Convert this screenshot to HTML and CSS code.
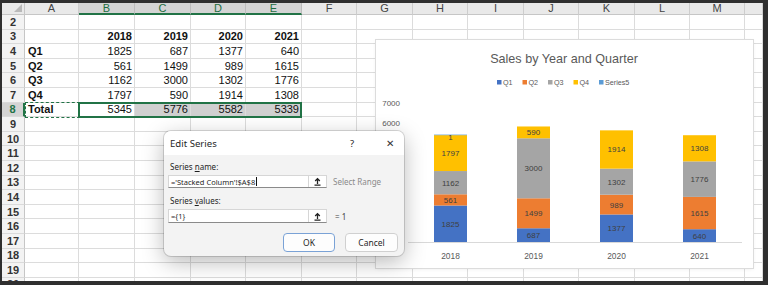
FILE: index.html
```html
<!DOCTYPE html>
<html>
<head>
<meta charset="utf-8">
<link rel="stylesheet" href="styles.css">
</head>
<body>
<div class="sheet">
  <div class="grid">
    <div class="corner"></div><div class="h">A</div><div class="h hs">B</div><div class="h hs">C</div><div class="h hs">D</div><div class="h hs">E</div><div class="h">F</div><div class="h">G</div><div class="h">H</div><div class="h">I</div><div class="h">J</div><div class="h">K</div><div class="h">L</div><div class="h">M</div><div class="h"></div>

    <div class="rh">2</div><div class="c"></div><div class="c"></div><div class="c"></div><div class="c"></div><div class="c"></div><div class="c"></div><div class="c"></div><div class="c"></div><div class="c"></div><div class="c"></div><div class="c"></div><div class="c"></div><div class="c"></div><div class="c"></div>

    <div class="rh">3</div><div class="c"></div><div class="c n b">2018</div><div class="c n b">2019</div><div class="c n b">2020</div><div class="c n b">2021</div><div class="c"></div><div class="c"></div><div class="c"></div><div class="c"></div><div class="c"></div><div class="c"></div><div class="c"></div><div class="c"></div><div class="c"></div>

    <div class="rh">4</div><div class="c b">Q1</div><div class="c n">1825</div><div class="c n">687</div><div class="c n">1377</div><div class="c n">640</div><div class="c"></div><div class="c"></div><div class="c"></div><div class="c"></div><div class="c"></div><div class="c"></div><div class="c"></div><div class="c"></div><div class="c"></div>

    <div class="rh">5</div><div class="c b">Q2</div><div class="c n">561</div><div class="c n">1499</div><div class="c n">989</div><div class="c n">1615</div><div class="c"></div><div class="c"></div><div class="c"></div><div class="c"></div><div class="c"></div><div class="c"></div><div class="c"></div><div class="c"></div><div class="c"></div>

    <div class="rh">6</div><div class="c b">Q3</div><div class="c n">1162</div><div class="c n">3000</div><div class="c n">1302</div><div class="c n">1776</div><div class="c"></div><div class="c"></div><div class="c"></div><div class="c"></div><div class="c"></div><div class="c"></div><div class="c"></div><div class="c"></div><div class="c"></div>

    <div class="rh">7</div><div class="c b">Q4</div><div class="c n">1797</div><div class="c n">590</div><div class="c n">1914</div><div class="c n">1308</div><div class="c"></div><div class="c"></div><div class="c"></div><div class="c"></div><div class="c"></div><div class="c"></div><div class="c"></div><div class="c"></div><div class="c"></div>

    <div class="rh rhs">8</div><div class="c b">Total</div><div class="c n">5345</div><div class="c n hl">5776</div><div class="c n hl">5582</div><div class="c n hl">5339</div><div class="c"></div><div class="c"></div><div class="c"></div><div class="c"></div><div class="c"></div><div class="c"></div><div class="c"></div><div class="c"></div><div class="c"></div>

    <div class="rh">9</div><div class="c"></div><div class="c"></div><div class="c"></div><div class="c"></div><div class="c"></div><div class="c"></div><div class="c"></div><div class="c"></div><div class="c"></div><div class="c"></div><div class="c"></div><div class="c"></div><div class="c"></div><div class="c"></div>
    <div class="rh">10</div><div class="c"></div><div class="c"></div><div class="c"></div><div class="c"></div><div class="c"></div><div class="c"></div><div class="c"></div><div class="c"></div><div class="c"></div><div class="c"></div><div class="c"></div><div class="c"></div><div class="c"></div><div class="c"></div>
    <div class="rh">11</div><div class="c"></div><div class="c"></div><div class="c"></div><div class="c"></div><div class="c"></div><div class="c"></div><div class="c"></div><div class="c"></div><div class="c"></div><div class="c"></div><div class="c"></div><div class="c"></div><div class="c"></div><div class="c"></div>
    <div class="rh">12</div><div class="c"></div><div class="c"></div><div class="c"></div><div class="c"></div><div class="c"></div><div class="c"></div><div class="c"></div><div class="c"></div><div class="c"></div><div class="c"></div><div class="c"></div><div class="c"></div><div class="c"></div><div class="c"></div>
    <div class="rh">13</div><div class="c"></div><div class="c"></div><div class="c"></div><div class="c"></div><div class="c"></div><div class="c"></div><div class="c"></div><div class="c"></div><div class="c"></div><div class="c"></div><div class="c"></div><div class="c"></div><div class="c"></div><div class="c"></div>
    <div class="rh">14</div><div class="c"></div><div class="c"></div><div class="c"></div><div class="c"></div><div class="c"></div><div class="c"></div><div class="c"></div><div class="c"></div><div class="c"></div><div class="c"></div><div class="c"></div><div class="c"></div><div class="c"></div><div class="c"></div>
    <div class="rh">15</div><div class="c"></div><div class="c"></div><div class="c"></div><div class="c"></div><div class="c"></div><div class="c"></div><div class="c"></div><div class="c"></div><div class="c"></div><div class="c"></div><div class="c"></div><div class="c"></div><div class="c"></div><div class="c"></div>
    <div class="rh">16</div><div class="c"></div><div class="c"></div><div class="c"></div><div class="c"></div><div class="c"></div><div class="c"></div><div class="c"></div><div class="c"></div><div class="c"></div><div class="c"></div><div class="c"></div><div class="c"></div><div class="c"></div><div class="c"></div>
    <div class="rh">17</div><div class="c"></div><div class="c"></div><div class="c"></div><div class="c"></div><div class="c"></div><div class="c"></div><div class="c"></div><div class="c"></div><div class="c"></div><div class="c"></div><div class="c"></div><div class="c"></div><div class="c"></div><div class="c"></div>
    <div class="rh">18</div><div class="c"></div><div class="c"></div><div class="c"></div><div class="c"></div><div class="c"></div><div class="c"></div><div class="c"></div><div class="c"></div><div class="c"></div><div class="c"></div><div class="c"></div><div class="c"></div><div class="c"></div><div class="c"></div>
    <div class="rh">19</div><div class="c"></div><div class="c"></div><div class="c"></div><div class="c"></div><div class="c"></div><div class="c"></div><div class="c"></div><div class="c"></div><div class="c"></div><div class="c"></div><div class="c"></div><div class="c"></div><div class="c"></div><div class="c"></div>
    <div class="rh">20</div><div class="c"></div><div class="c"></div><div class="c"></div><div class="c"></div><div class="c"></div><div class="c"></div><div class="c"></div><div class="c"></div><div class="c"></div><div class="c"></div><div class="c"></div><div class="c"></div><div class="c"></div><div class="c"></div>

    <div class="ants"></div>
    <div class="sel"></div>
  </div>

  <div class="chart">
    <svg class="chart-svg" viewBox="0 0 377 228" width="377" height="228">
      <text class="ct" x="188" y="23" text-anchor="middle">Sales by Year and Quarter</text>
      <g class="lg">
        <rect x="121" y="40" width="4.5" height="4.5" fill="#4472c4"/><text x="127" y="44.5">Q1</text>
        <rect x="146.5" y="40" width="4.5" height="4.5" fill="#ed7d31"/><text x="152.5" y="44.5">Q2</text>
        <rect x="172" y="40" width="4.5" height="4.5" fill="#a5a5a5"/><text x="178" y="44.5">Q3</text>
        <rect x="197.5" y="40" width="4.5" height="4.5" fill="#ffc000"/><text x="203.5" y="44.5">Q4</text>
        <rect x="223" y="40" width="4.5" height="4.5" fill="#5b9bd5"/><text x="229" y="44.5">Series5</text>
      </g>
      <g class="ax">
        <text x="24" y="66" text-anchor="end">7000</text>
        <text x="24" y="86" text-anchor="end">6000</text>
      </g>
      <line x1="32" y1="202.5" x2="366" y2="202.5" stroke="#d9d9d9" stroke-width="1"/>
      <g>
        <rect x="58" y="165.5" width="33" height="36.5" fill="#4472c4"/>
        <rect x="58" y="154.28" width="33" height="11.22" fill="#ed7d31"/>
        <rect x="58" y="131.04" width="33" height="23.24" fill="#a5a5a5"/>
        <rect x="58" y="95.1" width="33" height="35.94" fill="#ffc000"/>
        <rect x="58" y="94.6" width="33" height="0.6" fill="#5b9bd5"/>

        <rect x="141" y="188.26" width="33" height="13.74" fill="#4472c4"/>
        <rect x="141" y="158.28" width="33" height="29.98" fill="#ed7d31"/>
        <rect x="141" y="98.28" width="33" height="60" fill="#a5a5a5"/>
        <rect x="141" y="86.48" width="33" height="11.8" fill="#ffc000"/>

        <rect x="224" y="174.46" width="33" height="27.54" fill="#4472c4"/>
        <rect x="224" y="154.68" width="33" height="19.78" fill="#ed7d31"/>
        <rect x="224" y="128.64" width="33" height="26.04" fill="#a5a5a5"/>
        <rect x="224" y="90.36" width="33" height="38.28" fill="#ffc000"/>

        <rect x="307" y="189.2" width="33" height="12.8" fill="#4472c4"/>
        <rect x="307" y="156.9" width="33" height="32.3" fill="#ed7d31"/>
        <rect x="307" y="121.38" width="33" height="35.52" fill="#a5a5a5"/>
        <rect x="307" y="95.22" width="33" height="26.16" fill="#ffc000"/>
      </g>
      <g class="dl" text-anchor="middle">
        <text x="74.5" y="186.6">1825</text>
        <text x="74.5" y="162.8">561</text>
        <text x="74.5" y="145.6">1162</text>
        <text x="74.5" y="116">1797</text>
        <text x="74.5" y="100">1</text>

        <text x="157.5" y="198">687</text>
        <text x="157.5" y="176.2">1499</text>
        <text x="157.5" y="131.2">3000</text>
        <text x="157.5" y="95.3">590</text>

        <text x="240.5" y="191.1">1377</text>
        <text x="240.5" y="167.5">989</text>
        <text x="240.5" y="144.6">1302</text>
        <text x="240.5" y="112.4">1914</text>

        <text x="323.5" y="198.5">640</text>
        <text x="323.5" y="176">1615</text>
        <text x="323.5" y="142">1776</text>
        <text x="323.5" y="111.2">1308</text>
      </g>
      <g class="yr" text-anchor="middle">
        <text x="74.5" y="218.5">2018</text>
        <text x="157.5" y="218.5">2019</text>
        <text x="240.5" y="218.5">2020</text>
        <text x="323.5" y="218.5">2021</text>
      </g>
    </svg>
  </div>

  <div class="dlg">
    <div class="dlg-title">
      <span class="dlg-name">Edit Series</span>
      <span class="dlg-help">?</span>
      <span class="dlg-close">✕</span>
    </div>
    <div class="dlg-body">
      <div class="lbl">Series <u>n</u>ame:</div>
      <div class="field-row">
        <div class="field">
          <span class="field-text">='Stacked Column'!$A$8<span class="caret"></span></span>
          <span class="field-btn"><svg width="9" height="9" viewBox="0 0 9 9"><path d="M1.5 8.2H7.5M4.5 7V1.6M2.2 4L4.5 1.6L6.8 4" fill="none" stroke="#222" stroke-width="1.3"/></svg></span>
        </div>
        <span class="note">Select Range</span>
      </div>
      <div class="lbl lbl2">Series <u>v</u>alues:</div>
      <div class="field-row">
        <div class="field field2">
          <span class="field-text">={1}</span>
          <span class="field-btn"><svg width="9" height="9" viewBox="0 0 9 9"><path d="M1.5 8.2H7.5M4.5 7V1.6M2.2 4L4.5 1.6L6.8 4" fill="none" stroke="#222" stroke-width="1.3"/></svg></span>
        </div>
        <span class="note note2">= 1</span>
      </div>
      <div class="btns">
        <span class="btn btn-ok">OK</span>
        <span class="btn">Cancel</span>
      </div>
    </div>
  </div>
</div>
</body>
</html>
```

FILE: styles.css
```css
html, body {
  margin: 0;
  padding: 0;
  background: #2f2f2f;
}

body {
  width: 768px;
  height: 285px;
  overflow: hidden;
  padding-top: 3px;
  padding-left: 2px;
  box-sizing: border-box;
}

.sheet {
  width: 761px;
  height: 278px;
  overflow: hidden;
  position: relative;
  background: #fff;
  font-family: "Liberation Sans", Arial, sans-serif;
  font-size: 11px;
  color: #111;
}

.grid {
  position: relative;
  display: grid;
  grid-template-columns: 23px 54px 56px 56px 55px 56px 55px 56px 55px 56px 55px 56px 55px 55px 18px;
  grid-template-rows: 12px repeat(19, 14.6px);
}

.grid > div {
  box-sizing: border-box;
  overflow: hidden;
  white-space: nowrap;
}

.corner {
  background: #e9e9e9;
  border-right: 1px solid #c6c6c6;
  border-bottom: 1px solid #c6c6c6;
  display: flex;
  align-items: flex-end;
  justify-content: flex-end;
  padding: 0 2px 2px 0;
}

.corner::after {
  content: "";
  width: 8px;
  height: 8px;
  background: #b9b9b9;
  clip-path: polygon(100% 0, 100% 100%, 0 100%);
}

.h {
  background: #e9e9e9;
  border-right: 1px solid #cdcdcd;
  border-bottom: 1px solid #c6c6c6;
  color: #444;
  display: flex;
  align-items: center;
  justify-content: center;
  font-size: 11px;
  line-height: 1;
}

.hs {
  background: #d4d4d4;
  color: #1e6e41;
  border-bottom: 2px solid #217346;
  border-right-color: #bdbdbd;
}

.rh {
  background: #f3f3f3;
  border-right: 1px solid #c6c6c6;
  border-bottom: 1px solid #dadada;
  color: #333;
  font-weight: bold;
  display: flex;
  align-items: center;
  justify-content: center;
  font-size: 11px;
}

.rhs {
  background: #d4d4d4;
  color: #217346;
  border-right: 2px solid #217346;
}

.c {
  border-right: 1px solid #dcdcdc;
  border-bottom: 1px solid #dcdcdc;
  display: flex;
  align-items: center;
  padding: 0 2px 0 3px;
}

.n {
  justify-content: flex-end;
}

.b {
  font-weight: bold;
}

.hl {
  background: #d0d0d0;
}

.sel {
  position: absolute;
  grid-row: 8 / 9;
  grid-column: 3 / 7;
  inset: -1px 0 -1px -1px;
  border: 2px solid #217346;
}

.ants {
  position: absolute;
  grid-row: 8 / 9;
  grid-column: 2 / 3;
  inset: -1px -1px -1px 0;
  border: 1.5px dashed #217346;
}

.chart {
  position: absolute;
  left: 374px;
  top: 37px;
  width: 377px;
  height: 228px;
  background: #fff;
  box-shadow: 0 0 0 1px #dcdcdc, 0 1px 4px rgba(0, 0, 0, 0.08);
}

.chart-svg {
  display: block;
  font-family: "Liberation Sans", Arial, sans-serif;
}

.ct {
  font-size: 12.6px;
  fill: #595959;
}

.lg text {
  font-size: 7.2px;
  fill: #595959;
}

.ax text {
  font-size: 8px;
  fill: #595959;
}

.dl text {
  font-size: 8px;
  fill: #404040;
}

.yr text {
  font-size: 8.4px;
  fill: #595959;
}

.dlg {
  position: absolute;
  left: 162px;
  top: 128px;
  width: 240px;
  height: 125px;
  border-radius: 7px;
  background: #f3f3f3;
  box-shadow: 0 6px 22px rgba(0, 0, 0, 0.28), 0 0 0 1px rgba(0, 0, 0, 0.14);
  overflow: hidden;
  display: flex;
  flex-direction: column;
  font-family: "Noto Sans", "Open Sans", sans-serif;
  color: #1f1f1f;
}

.dlg-title {
  height: 24px;
  background: #fff;
  display: flex;
  align-items: center;
  padding-left: 6px;
  flex-shrink: 0;
}

.dlg-name {
  font-size: 9.6px;
  flex: 1;
}

.dlg-help {
  font-size: 9.5px;
  width: 36px;
}

.dlg-close {
  font-size: 10px;
  width: 18px;
  color: #333;
}

.dlg-body {
  display: flex;
  flex-direction: column;
  padding: 6px 6px 0 4px;
}

.lbl {
  font-size: 8px;
  line-height: 12px;
  height: 12px;
  margin-left: 2px;
}

.lbl2 {
  margin-top: 7px;
}

.field-row {
  display: flex;
  align-items: center;
  margin-top: 2px;
}

.field {
  width: 159px;
  height: 13px;
  box-sizing: border-box;
  background: #fff;
  border: 1px solid #d6d6d6;
  border-bottom-color: #8a8a8a;
  display: flex;
  align-items: center;
}

.field2 {
  height: 14px;
}

.field-text {
  flex: 1;
  font-size: 7.5px;
  padding-left: 2px;
  display: flex;
  align-items: center;
  white-space: nowrap;
}

.caret {
  width: 1px;
  height: 9px;
  background: #111;
  margin-left: 1px;
}

.field-btn {
  width: 17px;
  height: 100%;
  border-left: 1px solid #d6d6d6;
  display: flex;
  align-items: center;
  justify-content: center;
}

.note {
  font-size: 8px;
  color: #8a8a8a;
  margin-left: 6px;
}

.note2 {
  color: #444;
  margin-left: 8px;
}

.btns {
  display: flex;
  justify-content: flex-end;
  gap: 10px;
  margin-top: 10px;
}

.btn {
  width: 53px;
  height: 19px;
  box-sizing: border-box;
  border: 1px solid #d0d0d0;
  border-radius: 4px;
  background: #fdfdfd;
  font-size: 8.5px;
  display: flex;
  align-items: center;
  justify-content: center;
}

.btn-ok {
  width: 52px;
  border: 1.5px solid #7aa2d6;
}
```
